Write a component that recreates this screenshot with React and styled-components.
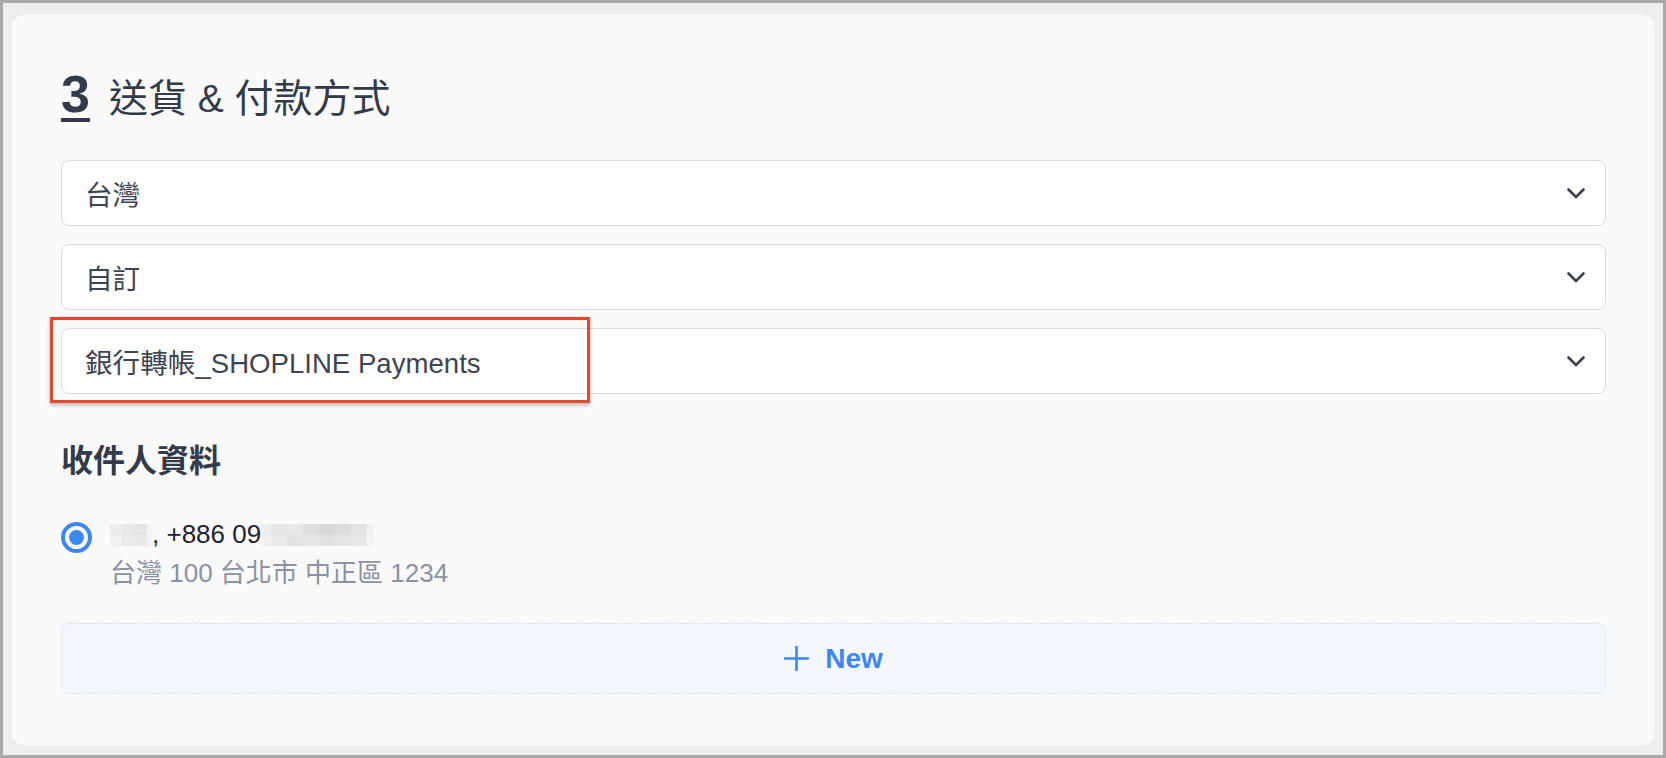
import React from 'react'
import styled, { createGlobalStyle } from 'styled-components'

const GlobalStyle = createGlobalStyle`
  html, body {
    margin: 0;
    padding: 0;
  }
  body {
    font-family: "Liberation Sans", "Noto Sans CJK TC", sans-serif;
    color: #333a4a;
  }
`

const Frame = styled.div`
  box-sizing: border-box;
  width: 1666px;
  height: 758px;
  border: 3px solid #a9a9a9;
  background: #edeef0;
  padding: 12px 8px 11px 9px;
`

const Card = styled.div`
  background: #fafafa;
  border-radius: 12px;
  padding: 53px 49px 51px 49px;
`

const Heading = styled.h2`
  display: flex;
  align-items: baseline;
  margin: 0 0 40px 0;
  height: 52px;
  line-height: 52px;
  font-weight: 400;
  font-size: 39px;
  color: #333a4a;
`

const StepNumber = styled.span`
  font-size: 52px;
  font-weight: 700;
  margin-right: 19px;
  text-decoration: underline;
  text-decoration-thickness: 4px;
  text-underline-offset: 6px;
`

const Selects = styled.div`
  display: flex;
  flex-direction: column;
  gap: 18px;
`

const SelectWrap = styled.div`
  position: relative;
`

const SelectBox = styled.div`
  box-sizing: border-box;
  height: 66px;
  display: flex;
  align-items: center;
  justify-content: space-between;
  padding: 0 20px 0 23px;
  background: #fff;
  border: 1.5px solid #d9dce8;
  border-radius: 8px;
  font-size: 27.6px;
  color: #3d4452;
`

const Highlight = styled.div`
  position: absolute;
  top: -11px;
  left: -11px;
  width: 540px;
  height: 86px;
  box-sizing: border-box;
  border: 3px solid #e6482c;
  box-shadow: 0 2px 4px rgba(0, 0, 0, 0.28);
  pointer-events: none;
`

const SubHeading = styled.h3`
  margin: 51px 0 0 0;
  font-size: 32px;
  line-height: 32px;
  font-weight: 700;
  color: #333a4a;
`

const AddressRow = styled.label`
  display: flex;
  align-items: flex-start;
  gap: 18px;
  margin-top: 38px;
`

const Radio = styled.span`
  box-sizing: border-box;
  flex: none;
  width: 31px;
  height: 31px;
  margin-top: 7px;
  border-radius: 50%;
  border: 4px solid #3d87f5;
  display: flex;
  align-items: center;
  justify-content: center;
  &::after {
    content: '';
    width: 15px;
    height: 15px;
    border-radius: 50%;
    background: #3d87f5;
  }
`

const AddressText = styled.div`
  font-size: 26px;
  line-height: 39px;
`

const ContactLine = styled.div`
  display: flex;
  align-items: center;
  color: #1e2330;
`

const AddressLine = styled.div`
  color: #8a92a5;
`

const Mosaic = styled.span`
  display: inline-flex;
  height: 22px;
  width: ${p => p.$w}px;
`

const MosaicCol = styled.span`
  flex: ${p => p.$flex};
  display: flex;
  flex-direction: column;
  & > span { flex: 1; }
`

const NewButton = styled.button`
  box-sizing: border-box;
  width: 100%;
  height: 71px;
  margin-top: 30px;
  display: flex;
  align-items: center;
  justify-content: center;
  gap: 16px;
  background: #f4f8fe;
  border: 1.5px dashed #d6e4fb;
  border-radius: 8px;
  color: #3d87f5;
  font-family: "Liberation Sans", "Noto Sans CJK TC", sans-serif;
  font-size: 28px;
  font-weight: 700;
  cursor: pointer;
`

const Chevron = () => (
  <svg width="18" height="11" viewBox="0 0 18 11" fill="none">
    <path d="M1.5 1.5 L9 9 L16.5 1.5" stroke="#3a4150" strokeWidth="2.6" strokeLinecap="round" strokeLinejoin="round" />
  </svg>
)

const Plus = () => (
  <svg width="25" height="25" viewBox="0 0 25 25" fill="none">
    <path d="M12.5 1 V24 M1 12.5 H24" stroke="#3d87f5" strokeWidth="2.6" strokeLinecap="round" />
  </svg>
)

const Blur = ({ width, cols }) => (
  <Mosaic $w={width}>
    {cols.map((c, i) => (
      <MosaicCol key={i} $flex={c[0]}>
        <span style={{ background: c[1] }} />
        <span style={{ background: c[2] }} />
      </MosaicCol>
    ))}
  </Mosaic>
)

const nameCells = [
  [1, '#ededed', '#f0f0f0'],
  [1, '#e8e8e8', '#ebebeb'],
  [1, '#e4e4e4', '#e9e9e9'],
  [0.4, '#f3f3f3', '#f4f4f4'],
]

const phoneCells = [
  [0.6, '#eeeeee', '#f1f1f1'],
  [1, '#e6e6e6', '#ebebeb'],
  [1, '#e9e9e9', '#e2e2e2'],
  [1, '#dedede', '#e6e6e6'],
  [1, '#d9d9d9', '#e1e1e1'],
  [1, '#dcdcdc', '#e4e4e4'],
  [1, '#e3e3e3', '#e8e8e8'],
  [0.4, '#f2f2f2', '#f4f4f4'],
]

const options = ['台灣', '自訂', '銀行轉帳_SHOPLINE Payments']

const App = () => (
  <>
    <GlobalStyle />
    <Frame>
      <Card>
        <Heading>
          <StepNumber>3</StepNumber>
          送貨 &amp; 付款方式
        </Heading>

        <Selects>
          {options.map((o, i) => (
            <SelectWrap key={o}>
              <SelectBox>
                <span>{o}</span>
                <Chevron />
              </SelectBox>
              {i === 2 && <Highlight />}
            </SelectWrap>
          ))}
        </Selects>

        <SubHeading>收件人資料</SubHeading>

        <AddressRow>
          <Radio />
          <AddressText>
            <ContactLine>
              <Blur width={42} cols={nameCells} />
              <span>, +886 09</span>
              <Blur width={112} cols={phoneCells} />
            </ContactLine>
            <AddressLine>台灣 100 台北市 中正區 1234</AddressLine>
          </AddressText>
        </AddressRow>

        <NewButton>
          <Plus />
          <span>New</span>
        </NewButton>
      </Card>
    </Frame>
  </>
)

export default App
